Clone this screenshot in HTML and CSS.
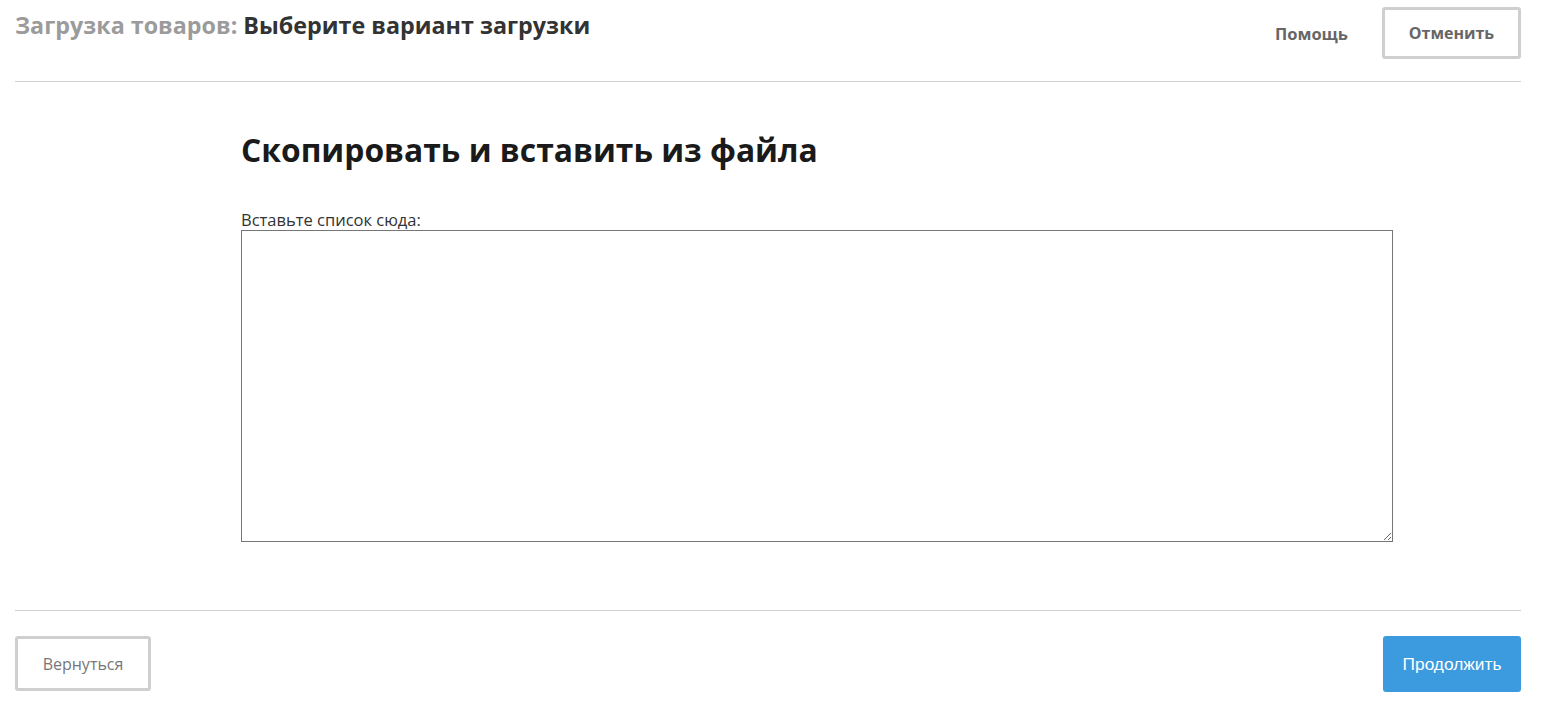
FILE: index.html
```html
<!DOCTYPE html>
<html lang="ru">
<head>
   <meta charset="UTF-8">
   <meta name="viewport" content="width=device-width, initial-scale=1.0">
   <title>Загрузка товаров</title>
   <link rel="stylesheet" href="styles.css">
</head>
<body>
   <div class="page">
      <header class="top">
         <h1 class="title"><span class="title-muted">Загрузка товаров:</span> Выберите вариант загрузки</h1>
         <div class="top-actions">
            <a class="link-help" href="#">Помощь</a>
            <button class="btn btn-outline btn-cancel" type="button">Отменить</button>
         </div>
      </header>

      <main class="content">
         <h2 class="heading">Скопировать и вставить из файла</h2>
         <label class="field-label" for="paste">Вставьте список сюда:</label>
         <textarea class="paste" id="paste"></textarea>
      </main>

      <footer class="bottom">
         <button class="btn btn-outline btn-back" type="button">Вернуться</button>
         <button class="btn btn-primary" type="button">Продолжить</button>
      </footer>
   </div>
</body>
</html>
```

FILE: styles.css
```css
body {
	margin: 0;
	font-family: 'Open Sans', 'Noto Sans', sans-serif;
	color: #333;
	background: #fff;
}
.page {
	padding: 0 29px 0 15px;
}
.top {
	display: flex;
	justify-content: space-between;
	align-items: flex-start;
	padding-top: 7px;
	height: 74px;
	border-bottom: 1px solid #d2d2d2;
	box-sizing: content-box;
}
.title {
	margin: 2px 0 0;
	font-size: 23.3px;
	font-weight: 700;
	color: #333;
}
.title-muted {
	color: #9b9b9b;
}
.top-actions {
	display: flex;
	align-items: center;
	gap: 34px;
}
.link-help {
	color: #666;
	font-size: 16.5px;
	font-weight: 700;
	text-decoration: none;
}
.btn {
	font-family: 'Open Sans', 'Noto Sans', sans-serif;
	font-size: 16px;
	border-radius: 3px;
	cursor: pointer;
	box-sizing: border-box;
}
.btn-outline {
	background: #fff;
	border: 3px solid #cfcfcf;
	color: #666;
}
.btn-cancel {
	width: 139px;
	height: 52px;
	font-weight: 700;
}
.content {
	padding: 46px 0 68px 226px;
}
.heading {
	margin: 0 0 39px;
	font-size: 31.8px;
	font-weight: 700;
	color: #1a1a1a;
}
.field-label {
	display: block;
	font-size: 16.5px;
	line-height: 20px;
	color: #333;
}
.paste {
	display: block;
	width: 1152px;
	height: 312px;
	margin: 0;
	border: 1px solid #767676;
	border-radius: 0;
	box-sizing: border-box;
}
.bottom {
	display: flex;
	justify-content: space-between;
	border-top: 1px solid #d2d2d2;
	padding-top: 25px;
}
.btn-back {
	width: 136px;
	height: 55px;
	color: #777;
}
.btn-primary {
	width: 138px;
	height: 56px;
	border: none;
	background: #3c9ade;
	color: #fff;
	font-family: 'Liberation Sans', Arial, sans-serif;
	font-size: 17.3px;
}
```
